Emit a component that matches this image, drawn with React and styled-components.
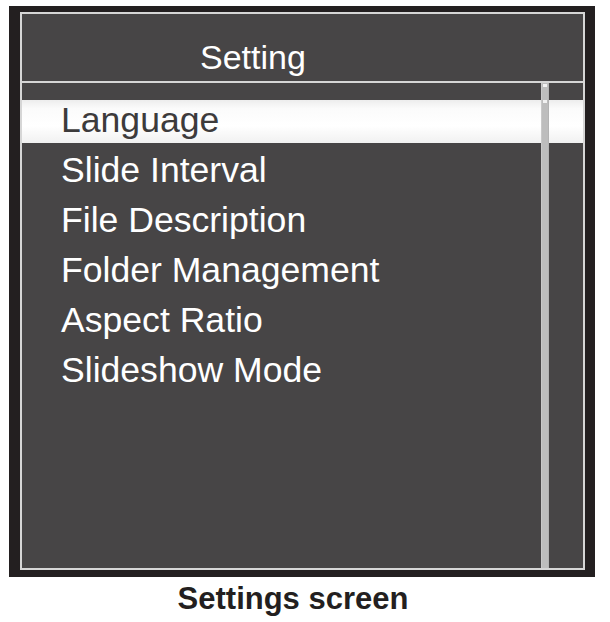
import React from "react";
import styled, { createGlobalStyle } from "styled-components";

const GlobalStyle = createGlobalStyle`
  body {
    margin: 0;
    background: #ffffff;
    font-family: "Liberation Sans", Arial, sans-serif;
  }
`;

const Page = styled.div`
  padding: 6px 0 0 9px;
  width: 586px;
`;

const Frame = styled.div`
  box-sizing: border-box;
  width: 586px;
  height: 571px;
  padding: 6px 10px 7px 11px;
  background: #231f20;
`;

const Panel = styled.div`
  box-sizing: border-box;
  height: 100%;
  display: flex;
  flex-direction: column;
  border: 2px solid #d6d6d6;
  background: #474546;
`;

const Header = styled.div`
  height: 69px;
  flex-shrink: 0;
  border-bottom: 2px solid #d6d6d6;
  padding: 23px 0 0 178px;
  box-sizing: border-box;
  color: #ffffff;
  font-size: 34px;
  line-height: 40px;
`;

const Body = styled.div`
  position: relative;
  flex: 1;
`;

const List = styled.ul`
  list-style: none;
  margin: 0;
  padding: 17px 0 0;
`;

const Item = styled.li`
  height: 43px;
  margin-bottom: 7px;
  padding-left: 39px;
  font-size: 35.6px;
  line-height: 40px;
  color: ${({ $active }) => ($active ? "#3d3b3c" : "#ffffff")};
  background: ${({ $active }) =>
    $active
      ? "linear-gradient(180deg, #ededed 0%, #fbfbfb 20%, #ffffff 60%, #f1f1f1 100%)"
      : "transparent"};
`;

const Scrollbar = styled.div`
  position: absolute;
  top: 0;
  bottom: 0;
  left: 519px;
  width: 8px;
  background: #bdbdbd;
  box-shadow: inset 1px 0 0 #c9c9c9, inset -1px 0 0 #b3b3b3;

  &::before,
  &::after {
    content: "";
    position: absolute;
    left: 2px;
    width: 4px;
    height: 3px;
    background: #f2f2f2;
  }

  &::before {
    top: 1px;
  }

  &::after {
    top: 17px;
  }
`;

const Caption = styled.div`
  margin-top: 4px;
  padding-right: 18px;
  text-align: center;
  font-size: 31px;
  line-height: 36px;
  font-weight: bold;
  color: #231f20;
`;

const items = [
  "Language",
  "Slide Interval",
  "File Description",
  "Folder Management",
  "Aspect Ratio",
  "Slideshow Mode",
];

export default function App() {
  return (
    <>
      <GlobalStyle />
      <Page>
        <Frame>
          <Panel>
            <Header>Setting</Header>
            <Body>
              <List>
                {items.map((label, i) => (
                  <Item key={label} $active={i === 0}>
                    {label}
                  </Item>
                ))}
              </List>
              <Scrollbar />
            </Body>
          </Panel>
        </Frame>
        <Caption>Settings screen</Caption>
      </Page>
    </>
  );
}
